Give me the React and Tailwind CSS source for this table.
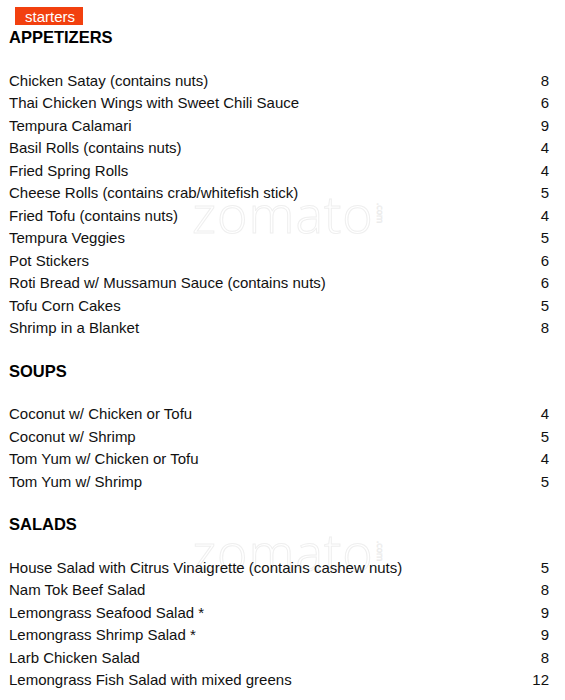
import React from 'react';

const sections = [
  {
    title: 'APPETIZERS',
    items: [
      ['Chicken Satay (contains nuts)', '8'],
      ['Thai Chicken Wings with Sweet Chili Sauce', '6'],
      ['Tempura Calamari', '9'],
      ['Basil Rolls (contains nuts)', '4'],
      ['Fried Spring Rolls', '4'],
      ['Cheese Rolls (contains crab/whitefish stick)', '5'],
      ['Fried Tofu (contains nuts)', '4'],
      ['Tempura Veggies', '5'],
      ['Pot Stickers', '6'],
      ['Roti Bread w/ Mussamun Sauce (contains nuts)', '6'],
      ['Tofu Corn Cakes', '5'],
      ['Shrimp in a Blanket', '8'],
    ],
  },
  {
    title: 'SOUPS',
    items: [
      ['Coconut w/ Chicken or Tofu', '4'],
      ['Coconut w/ Shrimp', '5'],
      ['Tom Yum w/ Chicken or Tofu', '4'],
      ['Tom Yum w/ Shrimp', '5'],
    ],
  },
  {
    title: 'SALADS',
    items: [
      ['House Salad with Citrus Vinaigrette (contains cashew nuts)', '5'],
      ['Nam Tok Beef Salad', '8'],
      ['Lemongrass Seafood Salad *', '9'],
      ['Lemongrass Shrimp Salad *', '9'],
      ['Larb Chicken Salad', '8'],
      ['Lemongrass Fish Salad with mixed greens', '12'],
    ],
  },
];

// faint outlined site watermark that sits behind the menu
const Watermark = ({ top }) => (
  <div
    className="absolute left-[192px] flex items-center pointer-events-none select-none"
    style={{ top }}
  >
    <span className="font-['Open_Sans',sans-serif] font-light text-[52px] leading-none tracking-[1px] text-transparent [-webkit-text-stroke:1px_#efefef]">
      zomato
    </span>
    <span className="ml-[2px] font-['Open_Sans',sans-serif] text-[9px] leading-none text-transparent [-webkit-text-stroke:0.6px_#ebebeb] [writing-mode:vertical-rl]">
      .com
    </span>
  </div>
);

const Section = ({ title, items, first }) => (
  <div className={first ? '' : 'mt-[20.5px]'}>
    <div className="h-[22.5px] flex items-center text-[16.5px] font-bold text-black">{title}</div>
    <div className="mt-[20.5px]">
      {items.map(([name, price]) => (
        <div key={name} className="h-[22.5px] flex items-center justify-between text-[15px] text-[#111]">
          <span>{name}</span>
          <span>{price}</span>
        </div>
      ))}
    </div>
  </div>
);

export default function App() {
  return (
    <div className="relative w-[565px] h-[700px] overflow-hidden bg-white font-['Liberation_Sans',Arial,sans-serif]">
      <Watermark top="187px" />
      <Watermark top="525px" />
      <div className="relative pl-[9px] pr-[16px] pt-[7px]">
        <div className="ml-[6px] flex w-fit h-[18px] items-center bg-[#f2400f] pl-[10px] pr-[8px] text-[15px] leading-none text-white">
          starters
        </div>
        <div className="mt-[1.5px]">
          {sections.map((s, i) => (
            <Section key={s.title} {...s} first={i === 0} />
          ))}
        </div>
      </div>
    </div>
  );
}
